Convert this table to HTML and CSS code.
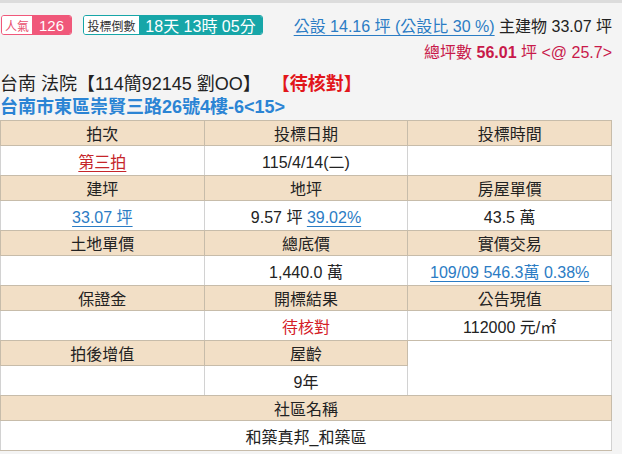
FILE: index.html
```html
<!DOCTYPE html>
<html lang="zh-Hant">
<head>
<meta charset="utf-8">
<link rel="stylesheet" href="styles.css">
</head>
<body>
<div class="topbar"></div>
<div class="page">
  <div class="line1">
    <span class="badge pop"><span class="lab">人氣</span><span class="val">126</span></span>
    <span class="badge cd"><span class="lab">投標倒數</span><span class="val">18天 13時 05分</span></span>
    <span class="area"><a class="link">公設 14.16 坪 (公設比 30 %)</a> 主建物 33.07 坪</span>
  </div>
  <div class="line2">總坪數 <b>56.01</b> 坪 &lt;@ 25.7&gt;</div>
  <div class="title">台南 法院【114簡92145 劉OO】<span class="status">【待核對】</span></div>
  <div class="addr">台南市東區崇賢三路26號4樓-6&lt;15&gt;</div>
  <table class="grid">
    <tr class="h"><th>拍次</th><th>投標日期</th><th>投標時間</th></tr>
    <tr class="d"><td><a class="red-link">第三拍</a></td><td>115/4/14(二)</td><td></td></tr>
    <tr class="h"><th>建坪</th><th>地坪</th><th>房屋單價</th></tr>
    <tr class="d"><td><a class="link">33.07 坪</a></td><td>9.57 坪 <a class="link">39.02%</a></td><td>43.5 萬</td></tr>
    <tr class="h"><th>土地單價</th><th>總底價</th><th>實價交易</th></tr>
    <tr class="d"><td></td><td>1,440.0 萬</td><td><a class="link">109/09 546.3萬 0.38%</a></td></tr>
    <tr class="h"><th>保證金</th><th>開標結果</th><th>公告現值</th></tr>
    <tr class="d"><td></td><td class="red">待核對</td><td>112000 元/㎡</td></tr>
    <tr class="h"><th>拍後增值</th><th>屋齡</th><td class="blank" rowspan="2"></td></tr>
    <tr class="d"><td></td><td>9年</td></tr>
    <tr class="h"><th colspan="3">社區名稱</th></tr>
    <tr class="d"><td colspan="3">和築真邦_和築區</td></tr>
  </table>
  <div class="next"></div>
</div>
</body>
</html>
```
FILE: styles.css
```css
* { box-sizing: border-box; }
html, body { margin: 0; padding: 0; }
body {
  background: #f4f4f4;
  font-family: "Liberation Sans", "Noto Sans CJK TC", sans-serif;
  color: #222;
  width: 622px;
  height: 454px;
  overflow: hidden;
}
.topbar { height: 3px; background: #dcdcdc; }
.page { width: 612px; padding-top: 12px; }
.line1 { display: flex; align-items: center; height: 20px; }
.badge {
  display: flex;
  height: 20px;
  border-radius: 3px;
  overflow: hidden;
  border: 1px solid;
}
.badge .lab {
  background: #fff;
  display: flex; align-items: center; justify-content: center;
  font-size: 12px;
}
.badge .val {
  display: flex; align-items: center; justify-content: center;
  color: #fff;
}
.pop { border-color: #f0587a; margin-left: 1px; width: 71px; }
.pop .lab { width: 30px; color: #e8506f; }
.pop .val { background: #f0587a; flex: 1; font-size: 15px; }
.cd { border-color: #17a6a8; margin-left: 11px; width: 180px; }
.cd .lab { width: 55px; color: #333; }
.cd .val { background: #17a6a8; flex: 1; font-size: 16px; }
.area { margin-left: auto; font-size: 16px; color: #222; white-space: nowrap; }
.link { color: #2b7cc4; text-decoration: underline; text-underline-offset: 3px; }
.line2 {
  text-align: right;
  color: #c8194a;
  font-size: 16px;
  margin-top: 7px;
  height: 22px;
  line-height: 22px;
}
.line2 b { font-weight: bold; }
.title {
  font-size: 18px;
  margin-top: 8px;
  height: 24px;
  line-height: 24px;
  color: #222;
}
.status { color: #e2161b; font-weight: bold; margin-left: 20px; }
.addr {
  font-size: 18px;
  font-weight: bold;
  color: #2b84d4;
  height: 22px;
  line-height: 22px;
  margin-bottom: 2px;
}
.grid {
  width: 612px;
  border-collapse: collapse;
  table-layout: fixed;
  border: 1px solid #8f8a80;
  font-size: 16px;
}
.grid th, .grid td {
  border: 1px solid #c7bcaa;
  text-align: center;
  padding: 0;
  font-weight: normal;
}
.grid th { background: #f2dfc6; height: 24px; }
.grid td { background: #fff; height: 30px; border-left-color: #d2d2d2; border-right-color: #d2d2d2; }
.grid .blank { background: #fff; }
.red-link { color: #c6252a; text-decoration: underline; text-underline-offset: 3px; }
.red { color: #d42027; }
.next { height: 8px; border-top: 1px solid #b8b2a6; margin-top: 3px; background: #f2e8da; }
```
